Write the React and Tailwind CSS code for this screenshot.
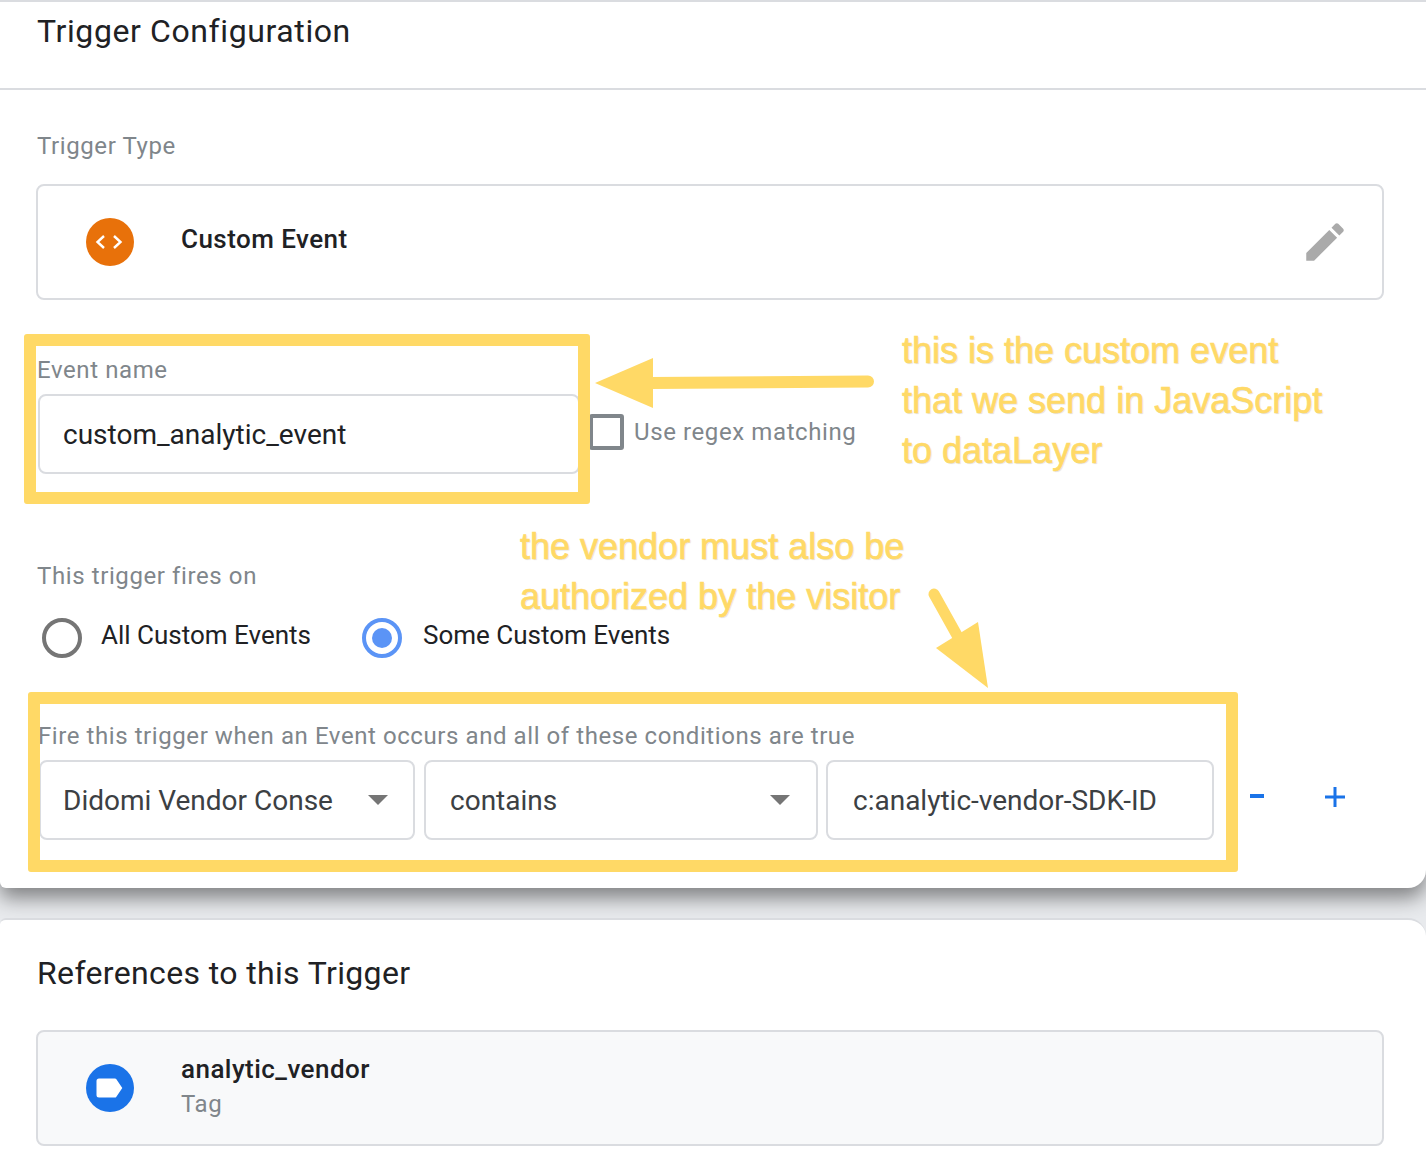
import React from "react";

const labelCls = "text-[24px] leading-[28px] text-[#80868b] tracking-[0.6px]";
const boxCls = "h-[80px] bg-white border-2 border-[#dadce0] rounded-lg flex items-center";
const noteCls =
  "absolute text-[36px] leading-[50px] text-[#ffd966] whitespace-nowrap font-['Liberation_Sans',sans-serif] [-webkit-text-stroke:0.7px_#ffd966] [text-shadow:1px_1px_1px_rgba(0,0,0,0.12)]";

function CodeIcon() {
  return (
    <svg width="48" height="48" viewBox="0 0 48 48" className="shrink-0">
      <circle cx="24" cy="24" r="24" fill="#e8710a" />
      <path d="M18 18l-6.5 6 6.5 6M28 18l6.5 6-6.5 6" fill="none" stroke="#fff" strokeWidth="2.4" />
    </svg>
  );
}

function TagIcon() {
  return (
    <svg width="48" height="48" viewBox="0 0 48 48" className="shrink-0">
      <circle cx="24" cy="24" r="24" fill="#1a73e8" />
      <path d="M13 14.5h16a1.5 1.5 0 0 1 1.2.6L36.3 24l-6.1 8.9a1.5 1.5 0 0 1-1.2.6H13a2.5 2.5 0 0 1-2.5-2.5V17a2.5 2.5 0 0 1 2.5-2.5z" fill="#fff" />
    </svg>
  );
}

function Caret() {
  return (
    <svg width="20" height="10" viewBox="0 0 20 10" className="shrink-0">
      <path d="M0 0h20L10 10z" fill="#757575" />
    </svg>
  );
}

function Radio({ checked, label, className = "" }) {
  return (
    <div className={"flex items-center " + className}>
      <div
        className={
          "w-[40px] h-[40px] rounded-full border-4 flex items-center justify-center " +
          (checked ? "border-[#5b94f6]" : "border-[#757575]")
        }
      >
        {checked && <div className="w-[20px] h-[20px] rounded-full bg-[#5b94f6]" />}
      </div>
      <span className={"-mt-[6px] text-[26px] leading-[32px] text-[#202124] " + (checked ? "ml-[21px]" : "ml-[19px]")}>{label}</span>
    </div>
  );
}

export default function App() {
  return (
    <div className="relative w-[1426px] h-[1166px] overflow-hidden bg-[#e8eaed] flex flex-col font-['Roboto',sans-serif]">
      {/* Trigger configuration */}
      <section className="relative h-[888px] shrink-0 bg-white rounded-bl-[6px] rounded-br-[18px] shadow-[0_10px_20px_rgba(0,0,0,0.45)]">
        <header className="h-[90px] border-t-2 border-b-2 border-[#dadce0] pl-[37px] pt-[13px]">
          <h2 className="text-[32px] leading-[32px] text-[#202124] font-normal tracking-[0.6px]">Trigger Configuration</h2>
        </header>

        <div className="pl-[36px] pr-[42px]">
          <div className={labelCls + " mt-[42px] ml-[1px]"}>Trigger Type</div>

          <div className="mt-[24px] h-[116px] border-2 border-[#dadce0] rounded-lg flex items-center pl-[48px] pr-[32px]">
            <CodeIcon />
            <span className="ml-[47px] -mt-[6px] text-[26px] leading-[32px] font-medium text-[#202124] tracking-[0.45px]">Custom Event</span>
            <svg width="50" height="50" viewBox="0 0 24 24" className="ml-auto" fill="#aaaaaa">
              <path d="M3 17.25V21h3.75L17.81 9.94l-3.75-3.75L3 17.25zM20.71 7.04c.39-.39.39-1.02 0-1.41l-2.34-2.34c-.39-.39-1.02-.39-1.41 0l-1.83 1.83 3.75 3.75 1.83-1.83z" />
            </svg>
          </div>

          <div className={labelCls + " mt-[56px] ml-[1px]"}>Event name</div>
          <div className="mt-[10px] ml-[2px] flex items-center">
            <div className={boxCls + " w-[542px] pl-[23px] text-[28px] text-[#202124]"}>
              <span className="mt-[1px]">custom_analytic_event</span>
            </div>
            <div className="ml-[9px] -mt-[4px] w-[35px] h-[36px] border-4 border-[#80868b] rounded-[3px]" />
            <span className="ml-[10px] -mt-[4px] text-[24px] leading-[28px] text-[#80868b] tracking-[0.6px]">Use regex matching</span>
          </div>

          <div className={labelCls + " mt-[88px] ml-[1px]"}>This trigger fires on</div>
          <div className="mt-[28px] ml-[6px] flex">
            <Radio label="All Custom Events" />
            <Radio checked label="Some Custom Events" className="ml-[51px]" />
          </div>

          <div className="mt-[64px] ml-[2px] text-[24px] leading-[28px] text-[#80868b] tracking-[0.575px] whitespace-nowrap">Fire this trigger when an Event occurs and all of these conditions are true</div>
          <div className="mt-[10px] ml-[3px] flex items-center">
            <div className={boxCls + " w-[376px] pl-[22px] pr-[25px] text-[28px] text-[#3c4043] justify-between"}>
              <span className="mt-[1px]">Didomi Vendor Conse</span>
              <Caret />
            </div>
            <div className={boxCls + " ml-[9px] w-[394px] pl-[24px] pr-[26px] text-[28px] text-[#3c4043] justify-between"}>
              <span className="mt-[1px]">contains</span>
              <Caret />
            </div>
            <div className={boxCls + " ml-[8px] w-[388px] pl-[25px] text-[28px] text-[#3c4043]"}>
              <span className="mt-[1px]">c:analytic-vendor-SDK-ID</span>
            </div>
            <svg width="14" height="4" viewBox="0 0 14 4" className="ml-[36px] -mt-[9px]">
              <path d="M0 0h14v4H0z" fill="#1a73e8" />
            </svg>
            <svg width="20" height="20" viewBox="0 0 20 20" className="ml-[61px] -mt-[6px]">
              <path d="M8.5 0h3v8.5H20v3h-8.5V20h-3v-8.5H0v-3h8.5z" fill="#1a73e8" />
            </svg>
          </div>
        </div>
      </section>

      {/* References */}
      <section className="relative mt-[30px] flex-1 bg-white border-t-2 border-[#dadce0] rounded-tl-[6px] rounded-tr-[18px] pl-[36px] pr-[42px]">
        <h2 className="mt-[37px] ml-[1px] text-[32px] leading-[32px] text-[#202124] font-normal tracking-[0.36px]">References to this Trigger</h2>
        <div className="mt-[41px] h-[116px] bg-[#f8f9fa] border-2 border-[#dadce0] rounded-lg flex items-center pl-[48px]">
          <TagIcon />
          <div className="ml-[47px] -mt-[6px]">
            <div className="text-[26px] leading-[32px] font-medium text-[#202124] tracking-[0.45px]">analytic_vendor</div>
            <div className="mt-[5px] text-[24px] leading-[28px] text-[#80868b] tracking-[0.6px]">Tag</div>
          </div>
        </div>
      </section>

      {/* Annotations drawn over the screenshot */}
      <div className="absolute left-[24px] top-[334px] w-[566px] h-[170px] border-[12px] border-[#ffd966] rounded-[3px]" />
      <div className="absolute left-[28px] top-[692px] w-[1210px] h-[180px] border-[12px] border-[#ffd966] rounded-[3px]" />

      <div className={noteCls + " left-[902px] top-[326px]"}>
        <div>this is the custom event</div>
        <div>that we send in JavaScript</div>
        <div>to dataLayer</div>
      </div>
      <div className={noteCls + " left-[520px] top-[522px]"}>
        <div>the vendor must also be</div>
        <div>authorized by the visitor</div>
      </div>

      <svg className="absolute left-[590px] top-[350px]" width="290" height="65" viewBox="0 0 290 65">
        <path d="M5 33L63 8v50z" fill="#ffd966" />
        <path d="M60 27l218-1.5a6 6 0 0 1 0 12L60 39z" fill="#ffd966" />
      </svg>
      <svg className="absolute left-[925px] top-[585px]" width="70" height="110" viewBox="0 0 70 110">
        <path d="M9 9l29 52" stroke="#ffd966" strokeWidth="11" strokeLinecap="round" />
        <path d="M53 37L11 63l52 40z" fill="#ffd966" />
      </svg>
    </div>
  );
}
